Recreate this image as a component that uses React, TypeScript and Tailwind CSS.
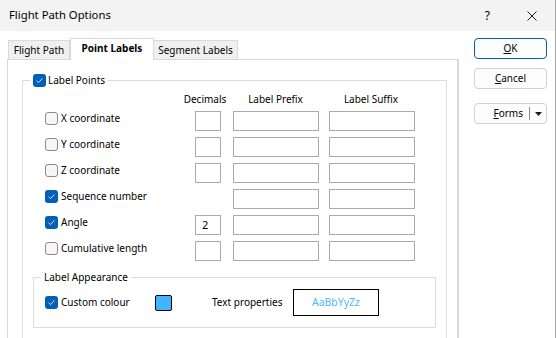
import React from "react";

type Row = {
  label: string;
  checked: boolean;
  decimals: boolean;
  value?: string;
};

const rows: Row[] = [
  { label: "X coordinate", checked: false, decimals: true },
  { label: "Y coordinate", checked: false, decimals: true },
  { label: "Z coordinate", checked: false, decimals: true },
  { label: "Sequence number", checked: true, decimals: false },
  { label: "Angle", checked: true, decimals: true, value: "2" },
  { label: "Cumulative length", checked: false, decimals: true }
];

function Check({ checked }: { checked: boolean }) {
  if (checked) {
    return (
      <span className="w-[13px] h-[13px] shrink-0 rounded-[3px] bg-[#005fb8] flex items-center justify-center">
        <svg width="9" height="9" viewBox="0 0 9 9">
          <path d="M1.6 4.7 L3.6 6.6 L7.4 2.4" stroke="#cfe0f3" strokeWidth="1" fill="none" />
        </svg>
      </span>
    );
  }
  return <span className="w-[13px] h-[13px] shrink-0 rounded-[3px] border border-[#8b8b8b] bg-[#f6f6f6]" />;
}

function Field({ width, value }: { width: string; value?: string }) {
  return (
    <div className={`${width} h-[20px] border border-[#ababab] bg-white flex items-center pl-[6px] text-[11px]`}>
      {value}
    </div>
  );
}

function App() {
  return (
    <div className="w-[556px] h-[338px] overflow-hidden bg-white border-r border-[#a8a8a8] flex flex-col font-['Noto_Sans',sans-serif] text-[10px] text-black">
      <div className="h-[31px] shrink-0 bg-[#f3f3f3] flex items-center">
        <span className="ml-[9px] text-[11.3px]">Flight Path Options</span>
        <span className="ml-auto mr-[37px] text-[12px]">?</span>
        <svg className="mr-[18px]" width="10" height="10" viewBox="0 0 10 10">
          <path d="M0.5 0.5 L9.5 9.5 M9.5 0.5 L0.5 9.5" stroke="#1b1b1b" strokeWidth="1" />
        </svg>
      </div>

      <div className="flex flex-1 min-h-0">
        <div className="w-[459px] pt-[7px] pl-[7px] flex flex-col">
          <div className="flex items-end h-[21px] pl-[1px] relative z-10">
            <div className="w-[62px] h-[19px] border border-b-0 border-[#d9d9d9] bg-[#f0f0f0] flex items-center justify-center">
              Flight Path
            </div>
            <div className="w-[84px] h-[22px] -mb-px border border-b-0 border-[#d9d9d9] bg-white flex items-center justify-center font-bold pb-[2px]">
              Point Labels
            </div>
            <div className="w-[84px] h-[19px] border border-b-0 border-l-0 border-[#d9d9d9] bg-[#f0f0f0] flex items-center justify-center">
              Segment Labels
            </div>
          </div>

          <div className="flex-1 border border-r-2 border-[#d9d9d9] bg-white">
            <fieldset className="ml-[14px] mt-[12px] w-[425px] border border-[#dcdcdc] pb-[40px]">
              <legend className="ml-[7px] px-[3px]">
                <span className="h-[16px] flex items-center gap-[2px] leading-[16px]">
                  <Check checked />
                  Label Points
                </span>
              </legend>

              <div className="pt-[3px] flex h-[19px] leading-[16px]">
                <div className="ml-[152px] w-[60px] text-center whitespace-nowrap">Decimals</div>
                <div className="w-[81px] text-center whitespace-nowrap">Label Prefix</div>
                <div className="w-[110px] text-center whitespace-nowrap">Label Suffix</div>
              </div>

              <div className="mt-[4px] pl-[22px] flex flex-col gap-[6px]">
                {rows.map(row => (
                  <div className="flex h-[20px] items-start" key={row.label}>
                    <div className="w-[150px] h-[13px] mt-[1px] flex items-center gap-[3px] leading-[13px] whitespace-nowrap">
                      <Check checked={row.checked} />
                      {row.label}
                    </div>
                    {row.decimals ? <Field width="w-[26px]" value={row.value} /> : <div className="w-[26px]" />}
                    <div className="ml-[12px]">
                      <Field width="w-[86px]" />
                    </div>
                    <div className="ml-[10px]">
                      <Field width="w-[86px]" />
                    </div>
                  </div>
                ))}
              </div>

              <fieldset className="mt-[8px] mx-[10px] border border-[#dcdcdc]">
                <legend className="ml-[7px] px-[3px] h-[16px] leading-[16px]">Label Appearance</legend>
                <div className="pt-[4px] pb-[11px] pl-[11px] flex items-center">
                  <div className="w-[110px] h-[27px] flex items-center gap-[3px] whitespace-nowrap">
                    <Check checked />
                    Custom colour
                  </div>
                  <div className="w-[17px] h-[16px] border border-black rounded-[2px] bg-[#3fb6ff]" />
                  <div className="ml-[40px] w-[81px] whitespace-nowrap">Text properties</div>
                  <div className="w-[86px] h-[27px] border border-black flex items-center justify-center text-[10.5px] text-[#52b9ff]">
                    AaBbYyZz
                  </div>
                </div>
              </fieldset>
            </fieldset>
          </div>
        </div>

        <div className="ml-[15px] pt-[7px] w-[73px] flex flex-col">
          <div className="h-[21px] border border-[#005fb8] rounded-[4px] bg-[#fdfdfd] flex items-center justify-center">
            <span>
              <span className="underline">O</span>K
            </span>
          </div>
          <div className="mt-[9px] h-[21px] border border-[#d1d1d1] rounded-[4px] bg-[#fdfdfd] flex items-center justify-center">
            <span>
              <span className="underline">C</span>ancel
            </span>
          </div>
          <div className="mt-[14px] h-[21px] border border-[#d1d1d1] rounded-[4px] bg-[#fdfdfd] flex items-center">
            <div className="w-[54px] text-right pr-[6px]">
              <span className="underline">F</span>orms
            </div>
            <div className="w-px h-[13px] bg-[#8a8a8a]" />
            <div className="flex-1 flex items-center justify-center">
              <svg width="7" height="4" viewBox="0 0 7 4">
                <path d="M0 0 L7 0 L3.5 4 Z" fill="#1b1b1b" />
              </svg>
            </div>
          </div>
        </div>
      </div>
    </div>
  );
}

export default App;
